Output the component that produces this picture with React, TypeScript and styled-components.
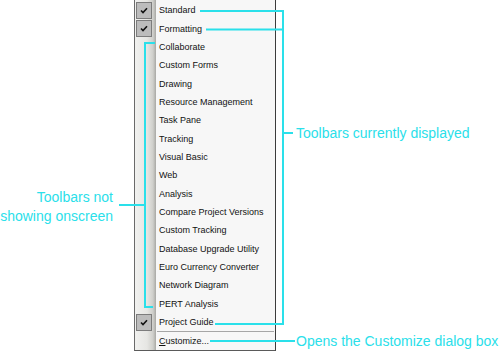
import styled, { createGlobalStyle } from "styled-components";

const GlobalStyle = createGlobalStyle`
  html, body {
    margin: 0;
    padding: 0;
    background: #ffffff;
  }
`;

const CYAN = "#2ae0ea";

const Page = styled.div`
  position: relative;
  display: flex;
  width: 500px;
  height: 352px;
  overflow: hidden;
  background: #ffffff;
  font-family: "Liberation Sans", Arial, sans-serif;
`;

const LeftNote = styled.div`
  width: 134px;
  flex-shrink: 0;
  box-sizing: border-box;
  padding: 188px 21px 0 0;
  display: flex;
  flex-direction: column;
  align-items: flex-end;
`;

const RightNote = styled.div`
  flex: 1;
  box-sizing: border-box;
  padding: 124px 0 0 20px;
  display: flex;
  flex-direction: column;
`;

const Callout = styled.div<{ $gap?: number }>`
  color: ${CYAN};
  font-size: 14px;
  line-height: 19px;
  white-space: nowrap;
  margin-top: ${(p) => p.$gap ?? 0}px;
  text-align: left;
`;

const CalloutRight = styled(Callout)`
  text-align: right;
`;

const Menu = styled.div`
  width: 142px;
  height: 351px;
  flex-shrink: 0;
  box-sizing: border-box;
  border-left: 1px solid #6a6a6a;
  border-right: 1px solid #3c3c3c;
  border-bottom: 1px solid #5a5a5a;
  padding-top: 1px;
  background: linear-gradient(
    to right,
    #f1f1ef 0px,
    #e6e6e3 12px,
    #cfcfcb 18px,
    #a8a8a4 21px,
    #f7f7f7 21px
  );
  display: flex;
  flex-direction: column;
`;

const Row = styled.div<{ $h?: number }>`
  height: ${(p) => p.$h ?? 18.35}px;
  flex-shrink: 0;
  display: flex;
  align-items: center;
  font-size: 9px;
  color: #111;
`;

const Gutter = styled.div`
  width: 21px;
  height: 100%;
  flex-shrink: 0;
  display: flex;
  align-items: center;
  padding-left: 1px;
  box-sizing: border-box;
`;

const CheckBox = styled.div`
  width: 16px;
  height: 17px;
  box-sizing: border-box;
  border: 1px solid #7c7c7c;
  background: #bcbcbc;
  display: flex;
  align-items: center;
  justify-content: center;
`;

const Label = styled.span`
  padding-left: 3px;
  white-space: nowrap;
`;

const Separator = styled.div`
  height: 0;
  flex-shrink: 0;
  margin-left: 22px;
  margin-right: 1px;
  border-top: 1px solid #a6a6a6;
`;

const Overlay = styled.svg`
  position: absolute;
  left: 0;
  top: 0;
  pointer-events: none;
`;

const Check = () => (
  <svg width="8" height="7" viewBox="0 0 8 7">
    <path d="M1 3.5 L3 5.5 L7 1.2" fill="none" stroke="#111" strokeWidth="1.6" />
  </svg>
);

const items: { name: string; checked?: boolean }[] = [
  { name: "Standard", checked: true },
  { name: "Formatting", checked: true },
  { name: "Collaborate" },
  { name: "Custom Forms" },
  { name: "Drawing" },
  { name: "Resource Management" },
  { name: "Task Pane" },
  { name: "Tracking" },
  { name: "Visual Basic" },
  { name: "Web" },
  { name: "Analysis" },
  { name: "Compare Project Versions" },
  { name: "Custom Tracking" },
  { name: "Database Upgrade Utility" },
  { name: "Euro Currency Converter" },
  { name: "Network Diagram" },
  { name: "PERT Analysis" },
  { name: "Project Guide", checked: true },
];

const App = function () {
  return (
    <>
      <GlobalStyle />
      <Page>
        <LeftNote>
          <CalloutRight>Toolbars not</CalloutRight>
          <CalloutRight>showing onscreen</CalloutRight>
        </LeftNote>
        <Menu>
          {items.map((item) => (
            <Row key={item.name}>
              <Gutter>
                {item.checked && (
                  <CheckBox>
                    <Check />
                  </CheckBox>
                )}
              </Gutter>
              <Label>{item.name}</Label>
            </Row>
          ))}
          <Separator />
          <Row $h={17}>
            <Gutter />
            <Label>
              <u>C</u>ustomize...
            </Label>
          </Row>
        </Menu>
        <RightNote>
          <Callout>Toolbars currently displayed</Callout>
          <Callout $gap={189}>Opens the Customize dialog box</Callout>
        </RightNote>
        <Overlay width="500" height="352">
          <g stroke={CYAN} strokeWidth="2" fill="none">
            <path d="M200 11 H283 V324 H215" />
            <path d="M206 29.5 H283" />
            <path d="M283 133 H293" />
            <path d="M210 341 H295" />
            <path d="M155 43 H145 V307 H153" />
            <path d="M119 205 H145" />
          </g>
        </Overlay>
      </Page>
    </>
  );
};

export default App;
